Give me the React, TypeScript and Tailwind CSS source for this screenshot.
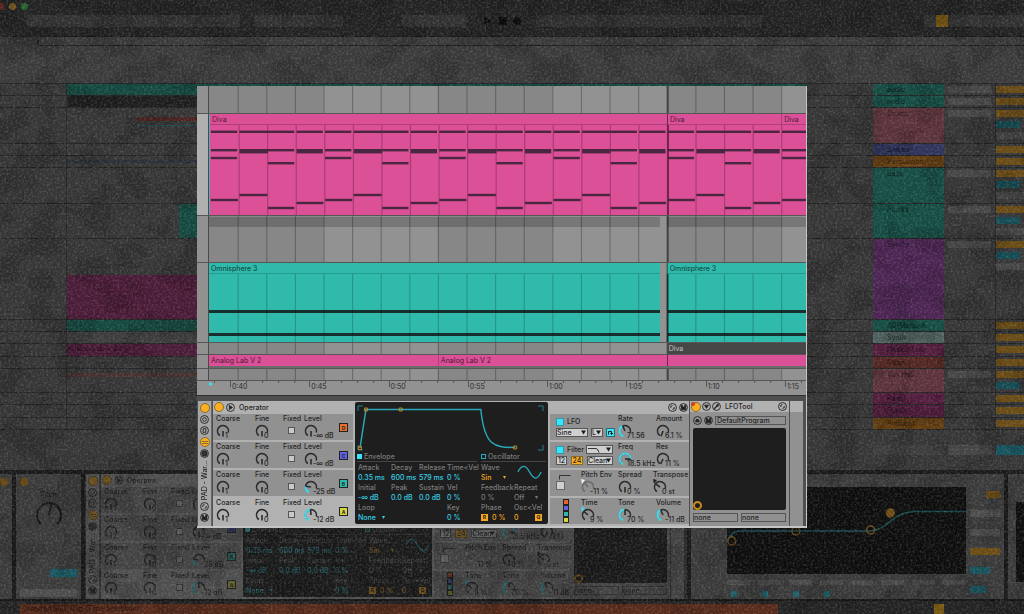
import { ReactNode } from 'react'

/* ---------- small controls ---------- */

function point(deg: number, r: number) {
  const a = (deg * Math.PI) / 180
  return `${(8 + r * Math.sin(a)).toFixed(2)} ${(8 - r * Math.cos(a)).toFixed(2)}`
}

function arc(from: number, to: number) {
  return `M${point(from, 5.5)} A5.5 5.5 0 ${to - from > 180 ? 1 : 0} 1 ${point(to, 5.5)}`
}

interface KnobProps {
  label: string
  value: string
  angle?: number
  lit?: boolean
  faded?: boolean
  marker?: string
}

function Knob({ label, value, angle = 180, lit, faded, marker }: KnobProps) {
  const ink = faded ? '#6a6a6a' : '#2b2b2b'
  return (
    <div className="whitespace-nowrap">
      <div className="h-[9px]">{label}</div>
      <div className="flex items-end">
        <svg className="w-4 h-4 shrink-0 -ml-px" viewBox="0 0 16 16" fill="none" strokeWidth="1.6">
          <path d={arc(215, 465)} stroke={ink} />
          {lit && <path d={arc(200, angle)} stroke="#3fdcf0" strokeWidth="2" />}
          <path d={`M8 8 L${point(angle, 5.5)}`} stroke={ink} />
          {marker && <path d="M1 0 L5 1 L2 5 Z" fill={marker} />}
        </svg>
        <span className="-ml-1.5 leading-[7px]">{value}</span>
      </div>
    </div>
  )
}

function Pick({ name, value, className }: { name: string; value: string; className: string }) {
  return (
    <span className={`relative inline-flex h-[9px] bg-[#cfcfcf] border border-[#555] ${className}`}>
      <select aria-label={name} className="w-full appearance-none bg-transparent leading-[7px] overflow-hidden">
        <option>{value}</option>
      </select>
      <svg className="absolute right-px top-px w-[5px] h-[5px] pointer-events-none" viewBox="0 0 5 5">
        <path d="M0 0.5h5L2.5 4.5z" fill="#1c1c1c" />
      </svg>
    </span>
  )
}

function Power({ name }: { name: string }) {
  return (
    <button aria-label={name} className="w-2.5 h-2.5 shrink-0 rounded-full bg-[#fbb024] border border-[#8a6a28]" />
  )
}

function RoundButton({ name, children }: { name: string; children: ReactNode }) {
  return (
    <button aria-label={name} className="block w-[9px] h-[9px] shrink-0">
      <svg viewBox="0 0 10 10" fill="none" stroke="#222" className="w-full h-full">
        <circle cx="5" cy="5" r="4.4" />
        {children}
      </svg>
    </button>
  )
}

const swapIcon = <path d="M3 5.5a2 2 0 0 1 2-2.5M7 4.5a2 2 0 0 1-2 2.5" strokeWidth="1.1" />
const saveIcon = <path d="M2.5 2.5h1.2v2h2.6v-2h1.2v5h-5z" fill="#222" />

/* ---------- Operator ---------- */

const oscillators = [
  { letter: 'D', color: 'bg-[#e8702c]', level: '-∞ dB', angle: 180, lit: false },
  { letter: 'C', color: 'bg-[#5f62e0]', level: '-∞ dB', angle: 180, lit: false },
  { letter: 'B', color: 'bg-[#2fb9a9]', level: '-25 dB', angle: 278, lit: true },
  { letter: 'A', color: 'bg-[#d6d63c]', level: '-12 dB', angle: 355, lit: true },
]

function OscillatorColumn() {
  return (
    <div className="w-[140px] shrink-0 flex flex-col gap-0.5">
      <div className="h-[10px] flex items-center gap-0.5 pl-px">
        <Power name="Operator on" />
        <RoundButton name="Unfold Operator">
          <path d="M3.8 2.8v4.4L7.2 5z" fill="#222" />
        </RoundButton>
        <span className="pl-0.5">Operator</span>
      </div>
      {oscillators.map((o) => (
        <div
          key={o.letter}
          className={`h-[26px] pl-[3px] grid grid-cols-[39px_28px_21px_1fr_14px] ${o.letter === 'A' ? '' : 'bg-[#919191]'}`}
        >
          <Knob label="Coarse" value="1" />
          <Knob label="Fine" value="0" />
          <label className="flex flex-col">
            Fixed
            <input type="checkbox" className="appearance-none w-[7px] h-[7px] ml-[5px] mt-1 bg-[#c9c9c9] border border-[#555]" />
          </label>
          <Knob label="Level" value={o.level} angle={o.angle} lit={o.lit} />
          <button className={`w-[9px] h-[9px] mt-[9px] border border-[#222] text-[5px] leading-[6px] font-bold ${o.color}`}>
            {o.letter}
          </button>
        </div>
      ))}
    </div>
  )
}

function Param({ label, children }: { label: string; children: ReactNode }) {
  return (
    <div className="h-5 whitespace-nowrap">
      <div className="text-[#7c7c7c] leading-[10px]">{label}</div>
      <div className="leading-[9px]">{children}</div>
    </div>
  )
}

function Display() {
  return (
    <div className="flex-1 h-[122px] bg-[#1e1e1e] rounded-xs px-0.5 text-[#35cfe6]">
      <svg className="w-full h-[50px]" viewBox="2 0 190 50" fill="none" preserveAspectRatio="none">
        <path d="M3 9V4h5M184 4h5v5M189 43v5h-5M8 48H3v-5" stroke="#1f8390" />
        <path d="M5 46 L11 7.5 H126.5 C130 44 140 45.5 161 45.5" stroke="#2aa7b8" strokeWidth="1.5" />
        <path d="M3.5 44.5h3v3h-3zM9.5 6h3v3h-3zM44.500 6h3v3h-3zM159.500 44h3v3h-3z" stroke="#c08a22" />
      </svg>
      <div className="flex gap-1 text-[#7c7c7c] leading-[9px]">
        <div className="flex-1 flex items-center gap-0.5 border-b border-[#444]">
          <span className="w-[5px] h-[5px] bg-[#3be3fb]" />
          Envelope
        </div>
        <div className="w-[65px] flex items-center gap-0.5 border-b border-[#444]">
          <span className="w-[5px] h-[5px] border border-[#2aa7b8]" />
          Oscillator
        </div>
      </div>
      <div className="grid grid-cols-[33px_28px_28px_34px_33px_1fr] pl-px pt-px">
        <Param label="Attack">0.35 ms</Param>
        <Param label="Decay">600 ms</Param>
        <Param label="Release">579 ms</Param>
        <Param label="Time&lt;Vel">0 %</Param>
        <Param label="Wave">
          <span className="flex items-center justify-between pr-2 text-[#f5a623]">
            Sin
            <svg className="w-[3px] h-[3px]" viewBox="0 0 3 3"><path d="M0 0h3L1.500 3z" fill="#f5a623" /></svg>
          </span>
        </Param>
        <svg className="w-7 h-5 pl-0.5" viewBox="0 0 28 20" fill="none">
          <path d="M2 9C6 1 10 1 14 8S22 20 27 9" stroke="#2aa7b8" strokeWidth="1.4" />
        </svg>
        <Param label="Initial">-∞ dB</Param>
        <Param label="Peak">0.0 dB</Param>
        <Param label="Sustain">0.0 dB</Param>
        <Param label="Vel">0 %</Param>
        <Param label="Feedback"><span className="text-[#7c7c7c]">0 %</span></Param>
        <Param label="Repeat">
          <span className="flex items-center justify-between pr-2 text-[#7c7c7c]">
            Off
            <svg className="w-[3px] h-[3px]" viewBox="0 0 3 3"><path d="M0 0h3L1.500 3z" fill="#7c7c7c" /></svg>
          </span>
        </Param>
        <div className="col-span-3">
          <label className="block text-[#7c7c7c] leading-[10px]">
            Loop
            <span className="flex items-center text-[#35cfe6] leading-[9px]">
              <select className="w-6 h-[9px] appearance-none bg-transparent leading-[9px]">
                <option>None</option>
              </select>
              <svg className="w-[3px] h-[3px]" viewBox="0 0 3 3"><path d="M0 0h3L1.500 3z" fill="#35cfe6" /></svg>
            </span>
          </label>
        </div>
        <Param label="Key">0 %</Param>
        <Param label="Phase">
          <span className="flex items-center gap-1 text-[#f5a623]">
            <button className="w-[7px] h-[7px] bg-[#f5a623] text-[#1e1e1e] text-[5px] leading-[7px] font-bold">R</button>
            0 %
          </span>
        </Param>
        <Param label="Osc&lt;Vel">
          <span className="flex items-center justify-between pr-1 text-[#f5a623]">
            0
            <button className="w-[7px] h-[7px] bg-[#f5a623] text-[#1e1e1e] text-[5px] leading-[7px] font-bold">Q</button>
          </span>
        </Param>
      </div>
    </div>
  )
}

const globalRow = 'h-[26px] pl-1.5 grid grid-cols-[62px_38px_1fr] bg-[#919191]'
const envelopeRow = 'h-[26px] pl-1.5 grid bg-[#919191]'

function GlobalColumn() {
  return (
    <div className="w-[139px] shrink-0 flex flex-col gap-0.5">
      <div className="h-[10px] flex items-center justify-end gap-0.5 pr-px">
        <RoundButton name="Hot-swap preset">{swapIcon}</RoundButton>
        <RoundButton name="Save preset">{saveIcon}</RoundButton>
      </div>
      <div className={globalRow}>
        <div className="flex flex-col gap-0.5 pt-[3px]">
          <label className="flex items-center gap-[3px] leading-[9px]">
            <input type="checkbox" defaultChecked className="appearance-none w-2 h-2 bg-[#3be3fb] border border-[#2a9aa9]" />
            LFO
          </label>
          <div className="flex gap-[3px]">
            <Pick name="LFO wave" value="Sine" className="w-8" />
            <Pick name="LFO range" value="L" className="w-3" />
            <button aria-label="Retrigger" className="w-[9px] h-[9px] bg-[#3be3fb] border border-[#2a6a74]">
              <svg viewBox="0 0 7 7" fill="none" stroke="#1c1c1c"><path d="M1.500 5.500v-3h3v3M3.500 4l1 1.500L6 4" /></svg>
            </button>
          </div>
        </div>
        <Knob label="Rate" value="71.56" angle={335} lit />
        <Knob label="Amount" value="6.1 %" angle={200} />
      </div>
      <div className={globalRow}>
        <div className="flex flex-col gap-0.5 pt-[3px]">
          <div className="flex">
            <label className="flex items-center gap-[3px] w-[30px] leading-[9px]">
              <input type="checkbox" defaultChecked className="appearance-none w-2 h-2 shrink-0 bg-[#3be3fb] border border-[#2a9aa9]" />
              Filter
            </label>
            <span className="relative inline-flex w-[27px] h-[9px]">
              <Pick name="Filter type" value="" className="w-full" />
              <svg className="absolute inset-0 w-[18px] h-full pointer-events-none" viewBox="0 0 18 9" fill="none" stroke="#333">
                <path d="M2 3.500h8q2 0 3 4" />
              </svg>
            </span>
          </div>
          <div className="flex gap-1">
            <button className="w-[11px] h-[9px] bg-[#cfcfcf] border border-[#555] leading-[7px]">12</button>
            <button className="w-3 h-[9px] bg-[#fbb024] border border-[#8a6a28] leading-[7px]">24</button>
            <Pick name="Filter circuit" value="Clean" className="w-[26px]" />
          </div>
        </div>
        <Knob label="Freq" value="18.5 kHz" angle={450} lit />
        <Knob label="Res" value="11 %" angle={205} />
      </div>
      <div className={`${envelopeRow} grid-cols-[25px_37px_35px_1fr]`}>
        <div className="flex flex-col">
          <svg className="w-4 h-[11px]" viewBox="0 0 16 11" fill="none" stroke="#333"><path d="M3.500 9.500v-4h11" /></svg>
          <input type="checkbox" aria-label="Pitch envelope" className="appearance-none w-[9px] h-[9px] bg-[#cfcfcf] border border-[#666]" />
        </div>
        <Knob label="Pitch Env" value="-11 %" angle={320} faded marker="#eee" />
        <Knob label="Spread" value="0 %" />
        <Knob label="Transpose" value="0 st" angle={305} marker="#222" />
      </div>
      <div className={`${envelopeRow} grid-cols-[25px_37px_38px_1fr]`}>
        <div className="flex flex-col gap-0.5 pl-2 pt-0.5">
          <span className="w-1 h-1 bg-[#e8602c] outline outline-[#222]" />
          <span className="w-1 h-1 bg-[#5f62e0] outline outline-[#222]" />
          <span className="w-1 h-1 bg-[#2fb9a9] outline outline-[#222]" />
          <span className="w-1 h-1 bg-[#d6d63c] outline outline-[#222]" />
        </div>
        <Knob label="Time" value="9 %" angle={310} marker="#3fdcf0" />
        <Knob label="Tone" value="70 %" angle={360} lit />
        <Knob label="Volume" value="-11 dB" angle={335} lit />
      </div>
    </div>
  )
}

/* ---------- device chain ---------- */

function RackStrip() {
  return (
    <div className="w-[14px] shrink-0 bg-[#a6a6a6] flex flex-col items-center gap-0.5 pt-0.5 pb-1 border-r border-[#666]">
      <Power name="Rack on" />
      <RoundButton name="Macros"><circle cx="5" cy="5" r="2" /></RoundButton>
      <RoundButton name="Chains"><path d="M3.500 3h3v4h-3z" /></RoundButton>
      <button aria-label="Devices" className="w-[10px] h-[10px] shrink-0 rounded-full bg-[#fbb024] border border-[#8a6a28] flex items-center justify-center">
        <span className="w-1.5 h-[3px] border-y border-[#8a6a28]" />
      </button>
      <RoundButton name="Variations"><circle cx="5" cy="5" r="3" fill="#333" /></RoundButton>
      <span className="flex-1 [writing-mode:vertical-rl] rotate-180 leading-[9px] whitespace-nowrap">PAD - War...</span>
      <RoundButton name="Hot-swap rack">{swapIcon}</RoundButton>
      <RoundButton name="Save rack">{saveIcon}</RoundButton>
    </div>
  )
}

function LfoTool() {
  return (
    <div className="w-[99px] shrink-0 bg-[#919191]">
      <div className="h-[11px] flex items-center gap-px pl-px pr-0.5 bg-[#b1b1b1]">
        <span className="relative flex">
          <Power name="LFOTool on" />
          <span className="absolute left-0 top-0 w-1 h-1 rounded-full bg-[#d0392b]" />
        </span>
        <RoundButton name="Fold LFOTool"><path d="M2.800 3.500h4.400L5 7z" fill="#222" /></RoundButton>
        <RoundButton name="Edit plug-in"><path d="M2.500 7.500l3-3M5 3l2 2M6 2.500L7.500 4" strokeWidth="1.500" /></RoundButton>
        <span className="flex-1 pl-[3px]">LFOTool</span>
        <RoundButton name="Hot-swap plug-in">{swapIcon}</RoundButton>
      </div>
      <div className="px-[3px] pt-1">
        <div className="flex items-center gap-0.5">
          <RoundButton name="Load program"><path d="M3 6.500h4l-1-2.500H3.500z" fill="#222" /></RoundButton>
          <RoundButton name="Save program">{saveIcon}</RoundButton>
          <input aria-label="Program" defaultValue="DefaultProgram" className="flex-1 min-w-0 h-[9px] px-px border border-[#555] bg-transparent leading-[7px]" />
        </div>
        <div className="h-[82px] mt-[3px] bg-[#1e1e1e] rounded-xs flex items-end">
          <span className="w-[9px] h-[9px] rounded-full border-2 border-[#c98a1a]" />
        </div>
        <div className="flex gap-[3px] mt-[3px]">
          <input aria-label="X parameter" defaultValue="none" className="flex-1 min-w-0 h-[9px] border border-[#555] bg-transparent leading-[7px]" />
          <input aria-label="Y parameter" defaultValue="none" className="flex-1 min-w-0 h-[9px] border border-[#555] bg-transparent leading-[7px]" />
        </div>
      </div>
    </div>
  )
}

function DeviceChain() {
  return (
    <div className="h-[125px] flex gap-px bg-[#4f4f4f] pl-px pr-[3px] text-[7px] leading-[9px] font-medium text-[#262626]">
      <RackStrip />
      <div className="flex-1 min-w-0 flex bg-[#b1b1b1] pt-px">
        <OscillatorColumn />
        <div className="flex-1 flex px-0.5">
          <Display />
        </div>
        <GlobalColumn />
      </div>
      <LfoTool />
      <div className="w-[13px] shrink-0 bg-[#919191] border-t-[11px] border-[#b1b1b1]" />
    </div>
  )
}

/* ---------- arrangement ---------- */

// 20 full bars and a partial one; 100 units per bar
const bars = Array.from({ length: 21 }, (_, i) => i)
const barColumns = 'grid-cols-[repeat(20,minmax(0,1fr))_minmax(0,0.87fr)]'

function BarLines({ shaded, ink = 'rgba(0,0,0,0.26)' }: { shaded?: boolean; ink?: string }) {
  return (
    <svg className="block w-full h-full" viewBox="0 0 2087 10" preserveAspectRatio="none">
      {shaded &&
        [0, 8, 16].map((b) => <rect key={b} x={b * 100} width="400" height="10" fill="#878787" />)}
      {bars.slice(1).map((b) => (
        <rect key={b} x={b * 100} width={b === 16 ? 7 : 4} height="10" fill={b === 16 ? 'rgba(0,0,0,0.5)' : ink} />
      ))}
    </svg>
  )
}

// y position of the upper, middle and low notes for each bar of the loop
const loop = [
  [[24, 95], [66, 95]],
  [[18, 98], [61, 98]],
  [[29, 92], [74, 92]],
  [[18, 94], [69, 94]],
]

function MidiNotes() {
  return (
    <svg className="block w-full h-full" viewBox="0 0 2087 90" preserveAspectRatio="none">
      {bars.slice(1).map((b) => (
        <rect key={b} x={b * 100} width={b === 16 ? 7 : 4} height="90" fill={b === 16 ? 'rgba(60,20,40,0.7)' : 'rgba(60,20,40,0.32)'} />
      ))}
      <g fill="#4a2740">
        {bars.map((b) => {
          const odd = b % 2 === 1
          const width = b % 4 === 1 ? 100 : 92
          const [mid, low] = loop[b % 4]
          return (
            <g key={b}>
              <rect x={b * 100 + 3} y="5.6" width={width} height="2.4" />
              <rect x={b * 100 + 3} y="24" width={width} height={odd ? 4.4 : 2.4} />
              {!odd && <rect x={b * 100 + 3} y={mid[0] === 24 ? 31.8 : 37} width={width} height="2.4" />}
              <rect x={b * 100 + 3} y={low[0] + 7.8} width={low[1]} height="2.4" />
            </g>
          )
        })}
      </g>
    </svg>
  )
}

interface LaneProps {
  height: string
  selected?: boolean
  children?: ReactNode
}

function Lane({ height, selected, children }: LaneProps) {
  return (
    <div className={`flex border-b border-[#565656] ${height}`}>
      <div className={`w-3 shrink-0 border-r border-[#4a4a4a] ${selected ? 'bg-[#b0b0b0]' : 'bg-[#919191]'}`} />
      <div className="flex-1 min-w-0 grid grid-cols-1 grid-rows-1 bg-[#929292] *:col-start-1 *:row-start-1 *:min-h-0">
        <BarLines shaded />
        {children}
      </div>
    </div>
  )
}

const times = ['0:40', '0:45', '0:50', '0:55', '1:00', '1:05', '1:10', '1:15']

function TimeRuler() {
  return (
    <div className="h-[14px] bg-[#929292] flex pl-3">
      <svg className="w-[21px] h-2 shrink-0" viewBox="0 0 21 8">
        <path d="M-1 4l1-2h2l1 2z" fill="#3fdcf0" stroke="#3fdcf0" />
        <path d="M5.500 0v2" stroke="#555" />
      </svg>
      <div className="flex-1 min-w-0 grid grid-cols-[repeat(7,minmax(0,79fr))_minmax(0,21fr)]">
        {times.map((t) => (
          <div key={t} className="relative pl-0.5 pt-px leading-[9px]">
            <svg className="absolute left-0 top-0 w-full h-1.5 overflow-hidden" viewBox="0 0 79 6" preserveAspectRatio="xMinYMin slice">
              <path d="M0.500 0v6M16.500 0v2M32.500 0v2M48.500 0v2M64.500 0v2" stroke="#555" />
            </svg>
            {t}
          </div>
        ))}
      </div>
    </div>
  )
}

function OmnisphereClip({ className }: { className: string }) {
  return (
    <div className={`bg-[#30baab] flex flex-col ${className}`}>
      <div className="h-[11px] pl-0.5 leading-[11px] border-b border-[#279a8d] whitespace-nowrap">Omnisphere 3</div>
      <div className="mt-9 h-[3px] bg-[#17302e]" />
      <div className="mt-5 h-[3px] bg-[#17302e]" />
    </div>
  )
}

function Arrangement() {
  return (
    <div className="text-[7px] text-[#2b2b2b]">
      <Lane height="h-7" />
      <Lane height="h-[102px]" selected>
        <div className="flex flex-col bg-[#dc5098] border-l border-[#59a6b8]">
          <div className={`h-[11px] grid ${barColumns} leading-[11px] border-b border-[#ae3f79] text-[#4a1c35]`}>
            <span className="col-span-16 pl-0.5">Diva</span>
            <span className="col-span-4 pl-0.5 border-l border-[#6b2a4d]">Diva</span>
            <span className="pl-0.5 border-l border-[#ae3f79]">Diva</span>
          </div>
          <div className="h-[90px]">
            <MidiNotes />
          </div>
        </div>
      </Lane>
      <Lane height="h-[47px]">
        <div className={`grid ${barColumns} items-start pt-px`}>
          <div className="col-span-16 mr-[7px] h-[10px] bg-black/18" />
          <div className="col-span-5 h-[10px] bg-black/18" />
        </div>
      </Lane>
      <Lane height="h-20">
        <div className={`grid ${barColumns} text-[#0f3833]`}>
          <OmnisphereClip className="col-span-16 mr-[7px]" />
          <OmnisphereClip className="col-span-5 border-l border-[#1d6b62]" />
        </div>
        <div className="pt-[11px]">
          <BarLines ink="rgba(0,0,0,0.2)" />
        </div>
      </Lane>
      <Lane height="h-3">
        <div className={`grid ${barColumns}`}>
          <div className="col-start-17 col-span-5 pl-0.5 bg-[#474747] text-[#c4c4c4] leading-[11px]">Diva</div>
        </div>
      </Lane>
      <Lane height="h-[14px]">
        <div className={`grid ${barColumns} bg-[#dc5098] border-b-2 border-[#6b6b6b] leading-[11px] text-[#4a1c35]`}>
          <span className="col-span-8 pl-0.5">Analog Lab V 2</span>
          <span className="col-span-8 pl-0.5 border-l border-[#ae3f79]">Analog Lab V 2</span>
          <span className="col-span-5 border-l border-[#6b2a4d]" />
        </div>
      </Lane>
      <Lane height="h-3" />
      <TimeRuler />
      <div className="h-1.5 bg-[#4f4f4f] border-t border-[#2e2e2e]" />
    </div>
  )
}

/* ---------- darkened session behind the panel ---------- */

interface Track {
  height: string
  color: string
  name: string
  clip?: ReactNode
  io?: boolean
  sends?: boolean
}

const tracks: Track[] = [
  { height: 'h-3', color: 'bg-[#144c43]', name: 'audio', io: true, clip: <div className="flex-1 bg-[#13483f]" /> },
  { height: 'h-3', color: 'bg-[#144c43]', name: 'audio', io: true, clip: <div className="flex-1 bg-[#1d1d1d]" /> },
  {
    height: 'h-9', color: 'bg-[#5c323a]', name: 'Drums', io: true, sends: true,
    clip: (
      <div className="flex-1 pl-[70px] pt-[9px]">
        <div className="h-1 bg-[#4c2423]" />
        <div className="mt-1 h-px bg-[#1d4d54]" />
      </div>
    ),
  },
  { height: 'h-3', color: 'bg-[#2f335c]', name: 'Snares' },
  { height: 'h-3', color: 'bg-[#633d10]', name: 'Percussion', clip: <div className="flex-1 mt-1 mb-1 bg-[#2a3038]" /> },
  { height: 'h-9', color: 'bg-[#144c43]', name: 'Bass', io: true, sends: true },
  {
    height: 'h-[35px]', color: 'bg-[#144c43]', name: 'Plucks', io: true, sends: true,
    clip: <div className="flex-1 ml-[112px] bg-[#13483f]" />,
  },
  {
    height: 'h-[81px]', color: 'bg-[#4c2453]', name: 'Synths', io: true, sends: true,
    clip: <div className="flex-1 mt-9 bg-[#4a1b37]" />,
  },
  { height: 'h-3', color: 'bg-[#144c43]', name: '40-Mono-A', clip: <div className="flex-1 bg-[#13483f]" /> },
  { height: 'h-3', color: 'bg-[#4d5f5d]', name: 'Synth', clip: <div className="flex-1 bg-[#3c3c3c]" /> },
  { height: 'h-[13px]', color: 'bg-[#521c3d]', name: 'Analog Lab', clip: <div className="flex-1 bg-[#4a1b37] text-black/60">Analog Lab V 2</div> },
  { height: 'h-3', color: 'bg-[#522622]', name: 'Open' },
  { height: 'h-6', color: 'bg-[#5c323a]', name: 'Vox Hall', io: true, sends: true, clip: <div className="flex-1 mt-1 h-1 bg-[#46302e]" /> },
  { height: 'h-3', color: 'bg-[#521c3d]', name: 'Pads' },
  { height: 'h-[13px]', color: 'bg-[#521c3d]', name: 'Synth' },
  { height: 'h-3', color: 'bg-[#633d10]', name: 'Ambient' },
]

function TrackRow({ track }: { track: Track }) {
  return (
    <div className={`flex border-b border-[#232323] overflow-hidden ${track.height}`}>
      <div className="w-[67px] shrink-0 border-r border-[#262626]" />
      <div className="flex-1 flex">{track.clip}</div>
      <div className="w-[66px] shrink-0" />
      <div className={`w-[71px] shrink-0 pl-3.5 leading-[11px] ${track.color}`}>{track.name}</div>
      <div className="w-[52px] shrink-0 px-1 pt-0.5 border-r border-[#262626]">
        {track.io && <div className="h-[7px] bg-[#464646]" />}
      </div>
      <div className="w-[28px] shrink-0 pt-0.5 flex flex-col gap-1">
        <div className="h-[7px] shrink-0 bg-[#684a14]" />
        {track.sends && <div className="h-[7px] w-6 shrink-0 bg-[#144a52]" />}
        {track.sends && <div className="h-[7px] shrink-0 bg-[#444]" />}
      </div>
    </div>
  )
}

function EqDevice() {
  return (
    <div className="flex-1 min-w-0 flex gap-1 p-1 pl-9 pt-[13px] bg-[#3a3a3a]">
      <div className="flex-1 min-w-0">
        <svg className="w-full h-[87px] bg-[#0e0e0e]" viewBox="0 0 243 87" preserveAspectRatio="none" fill="none">
          <path d="M0 54Q4 44 14 44H146C165 42 168 25 190 24.500H243" stroke="#1a4a4f" strokeWidth="1.500" />
          <g stroke="#6a4b14" strokeWidth="1.500">
            <circle cx="5" cy="54" r="4" />
            <circle cx="70" cy="44" r="4" />
            <circle cx="146" cy="43" r="4" />
            <circle cx="166" cy="26" r="4" fill="#6a4b14" />
          </g>
        </svg>
        <div className="grid grid-cols-8 gap-2 pt-1.5">
          {[1, 2, 3, 4, 5, 6, 7, 8].map((band) => (
            <div key={band} className="flex flex-col gap-1.5">
              <span className="h-[5px] bg-[#484848]" />
              <span className={`w-1.5 h-1.5 ml-1 ${band < 5 ? 'bg-[#1b5f67]' : 'bg-[#303030]'}`} />
            </div>
          ))}
        </div>
      </div>
      <div className="w-[30px] shrink-0 flex flex-col gap-3 pt-1">
        <span className="h-[7px] ml-4 bg-[#6a4b14]" />
        <span className="h-[7px] bg-[#4c4c4c]" />
        <span className="h-[7px] bg-[#4c4c4c]" />
        <span className="h-[7px] bg-[#6a4b14]" />
        <span className="h-[7px] w-5 bg-[#175660]" />
        <span className="h-[7px] w-4 bg-[#175660]" />
      </div>
    </div>
  )
}

function Backdrop() {
  return (
    <div inert className="text-[7px] leading-[9px] text-black/60 bg-[#353535]">
      <div className="h-[37px] bg-[#222] border-b border-[#1a1a1a]">
        <div className="h-[15px] flex items-start pt-[3px] gap-[5px]">
          <span className="w-1 h-[7px] rounded-r-full bg-[#6b2a26]" />
          <span className="w-[7px] h-[7px] rounded-full bg-[#7a5a20]" />
          <span className="w-[7px] h-[7px] rounded-full bg-[#23612a]" />
        </div>
        <div className="h-3 flex pl-[27px]">
          <span className="w-[213px] bg-[#303030]" />
          <span className="w-[89px] ml-3.5 bg-[#303030]" />
          <span className="w-16 ml-[59px] bg-[#303030]" />
          <svg className="w-[42px] ml-4" viewBox="0 0 42 12" fill="#0a0a0a">
            <path d="M2 2l7 4-7 4zM17 2h8v8h-8z" />
            <circle cx="35" cy="6" r="4" />
          </svg>
          <span className="w-[226px] ml-3 bg-[#2d2d2d]" />
          <span className="w-3 ml-auto bg-[#333]" />
          <span className="w-3 bg-[#75550f]" />
          <span className="w-[76px] bg-[#303030]" />
        </div>
      </div>
      <div className="h-[9px] ml-[37px] bg-[#3a3a3a] border-l-2 border-b border-[#1f1f1f]" />
      <div className="h-[38px] bg-[#3a3a3a] border-b border-[#232323]" />
      {tracks.map((track, i) => (
        <TrackRow key={i} track={track} />
      ))}
      <div className="h-[44px] flex justify-end pt-[15px] border-b-4 border-[#1a1a1a]">
        <span className="w-[71px] h-2.5 bg-[#3c3c3c]" />
        <span className="w-11 h-2.5 mx-1 bg-[#444]" />
        <span className="w-7 h-2.5 bg-[#175660]" />
      </div>
      <div className="flex gap-1 h-[127px] bg-[#181818] border-b-2 border-[#151515]">
        <div className="w-3 shrink-0 pt-1 bg-[#3a3a3a]">
          <span className="block w-2 h-2 rounded-full bg-[#6a4b14]" />
        </div>
        <div className="w-[65px] shrink-0 px-1 pt-1 bg-[#3a3a3a]">
          <span className="block w-2 h-2 rounded-full bg-[#6a4b14]" />
          <div className="text-center pt-1">Pitch</div>
          <svg className="w-7 h-7 mx-auto mt-0.5" viewBox="0 0 28 28" fill="none" stroke="#161616" strokeWidth="2">
            <path d="M6 23A12 12 0 1 1 22 23M14 14l2-11" />
          </svg>
          <div className="h-2 mt-10 ml-auto w-[27px] bg-[#175660]" />
          <div className="h-2 mt-3 bg-[#4c4c4c]" />
        </div>
        <div className="w-[602px] shrink-0 opacity-35">
          <DeviceChain />
        </div>
        <EqDevice />
        <div className="w-4 shrink-0 pl-2 bg-[#3a3a3a]">
          <div className="h-20 mt-7 bg-[#0e0e0e]" />
        </div>
      </div>
      <div className="h-[13px] flex pl-5 pt-[3px] bg-[#222]">
        <div className="w-[758px] pl-1 bg-[#562a1a]">Inserted MIDI Clip (Time Selection)</div>
        <span className="w-2.5 ml-[156px] bg-[#75550f]" />
      </div>
    </div>
  )
}

function Grunge() {
  return (
    <svg className="absolute inset-0 w-full h-full pointer-events-none">
      <filter id="speckle" x="0" y="0" width="100%" height="100%">
        <feTurbulence type="fractalNoise" baseFrequency="0.45" numOctaves="3" seed="4" />
        <feColorMatrix values="0 0 0 0 0.8  0 0 0 0 0.8  0 0 0 0 0.8  2 0 0 0 -0.850" />
      </filter>
      <filter id="stain" x="0" y="0" width="100%" height="100%">
        <feTurbulence type="fractalNoise" baseFrequency="0.035" numOctaves="5" seed="11" />
        <feColorMatrix values="0 0 0 0 0  0 0 0 0 0  0 0 0 0 0  7 0 0 0 -3.300" />
      </filter>
      <rect width="100%" height="100%" filter="url(#stain)" opacity="0.13" />
      <rect width="100%" height="100%" filter="url(#speckle)" opacity="0.2" />
    </svg>
  )
}

export default function App() {
  return (
    <div className="relative min-h-screen overflow-hidden bg-[#222] font-['Inter',sans-serif]">
      <Backdrop />
      <Grunge />
      <main className="absolute top-[86px] left-[197px] right-[217px] border-r border-b-2 border-[#c4c4c4]">
        <Arrangement />
        <DeviceChain />
      </main>
    </div>
  )
}
